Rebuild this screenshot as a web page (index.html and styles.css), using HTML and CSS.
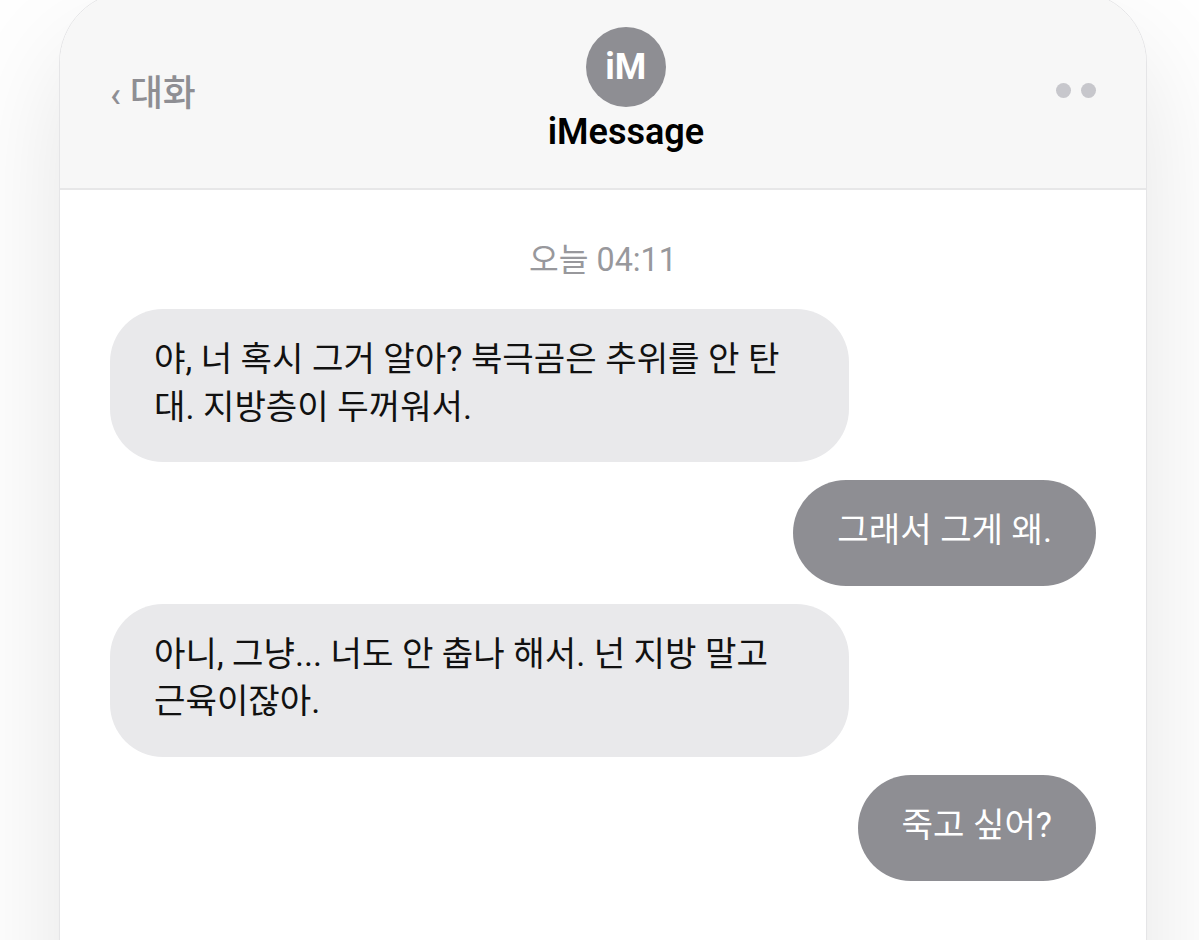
FILE: index.html
```
<!DOCTYPE html>
<html lang="ko">
<head>
  <meta charset="UTF-8">
  <title>iMessage</title>
  <link rel="stylesheet" href="styles.css">
</head>
<body>
  <div class="phone">
    <header class="chat-header">
      <div class="back"><span class="arrow">‹</span> 대화</div>
      <div class="contact">
        <div class="avatar">iM</div>
        <div class="name">iMessage</div>
      </div>
      <div class="dots">
        <span class="dot"></span>
        <span class="dot"></span>
      </div>
    </header>

    <main class="messages">
      <div class="time">오늘 04:11</div>
      <div class="bubble received">야, 너 혹시 그거 알아? 북극곰은 추위를 안 탄<br>대. 지방층이 두꺼워서.</div>
      <div class="bubble sent">그래서 그게 왜.</div>
      <div class="bubble received">아니, 그냥... 너도 안 춥나 해서. 넌 지방 말고<br>근육이잖아.</div>
      <div class="bubble sent">죽고 싶어?</div>
    </main>
  </div>
</body>
</html>
```
FILE: styles.css
```
* {
  box-sizing: border-box;
}

body {
  margin: 0;
  height: 940px;
  overflow: hidden;
  background-color: #fefefe;
  font-family: Roboto, 'Noto Sans CJK KR', sans-serif;
  color: #111;
}

.phone {
  width: 1088px;
  height: 1300px;
  margin: -9px 0 0 59px;
  background-color: #fff;
  border: 1px solid #e5e5e7;
  border-radius: 72px;
  overflow: hidden;
  box-shadow: 0 54px 108px rgba(0, 0, 0, 0.1);
}

.chat-header {
  display: flex;
  justify-content: space-between;
  align-items: center;
  height: 198px;
  padding: 0 50px;
  background-color: #f7f7f7;
  border-bottom: 2px solid #e7e7e8;
}

.back {
  padding-top: 8px;
  font-size: 35.8px;
  font-weight: 500;
  line-height: 48px;
  color: #8e8e93;
}

.contact {
  display: flex;
  flex-direction: column;
  align-items: center;
  height: 126px;
}

.avatar {
  flex-shrink: 0;
  width: 80px;
  height: 80px;
  border-radius: 50%;
  background-color: #8e8e93;
  color: #fff;
  font-size: 36px;
  font-weight: 700;
  line-height: 80px;
  text-align: center;
}

.name {
  font-size: 36px;
  font-weight: 600;
  line-height: 50px;
  color: #000;
}

.dots {
  display: flex;
  gap: 10px;
}

.dot {
  width: 15px;
  height: 15px;
  border-radius: 50%;
  background-color: #c7c7cc;
}

.messages {
  display: flex;
  flex-direction: column;
  gap: 18px;
  padding: 46px 50px;
}

.time {
  font-size: 32.3px;
  line-height: 48px;
  margin-bottom: 7px;
  text-align: center;
  color: #98989c;
}

.bubble {
  max-width: 739px;
  padding: 27px 44px 31px;
  border-radius: 53px;
  font-size: 34.2px;
  line-height: 47.6px;
  white-space: nowrap;
}

.received {
  align-self: flex-start;
  width: 739px;
  background-color: #e9e9eb;
}

.sent {
  align-self: flex-end;
  background-color: #8e8e93;
  color: #fff;
}
```
